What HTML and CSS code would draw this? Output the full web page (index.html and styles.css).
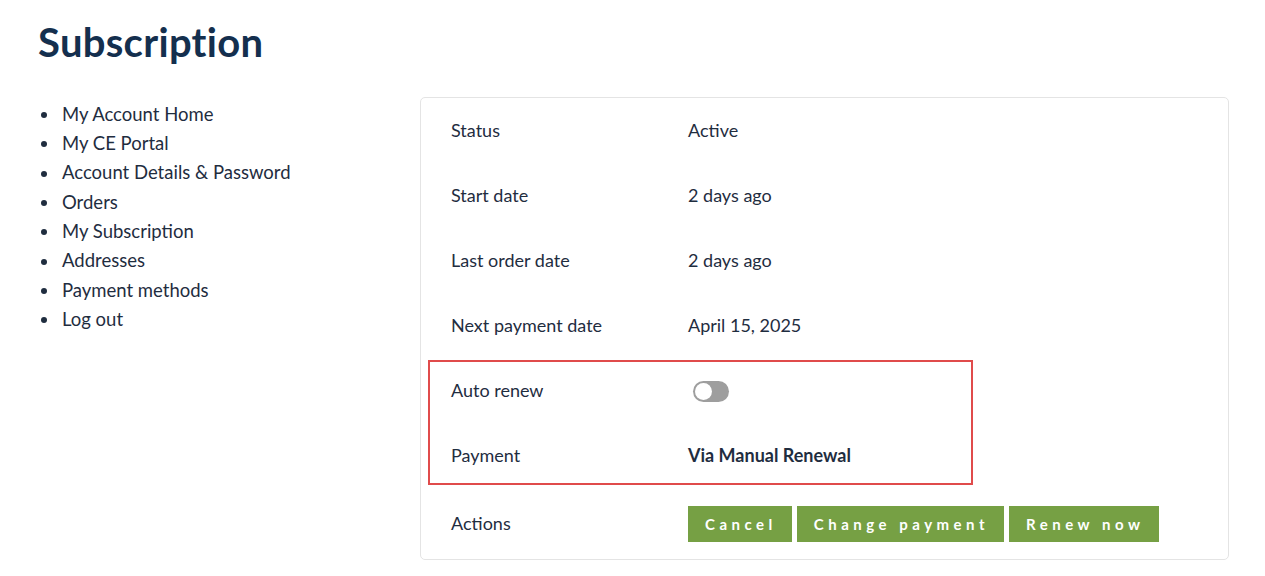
FILE: index.html
```html
<!DOCTYPE html>
<html lang="en">
<head>
    <meta charset="UTF-8">
    <title>Subscription</title>
    <link rel="stylesheet" href="styles.css">
</head>
<body>
<div id="account">
    <h1 class="pageTitle">Subscription</h1>
    <div class="wrap">
        <ul class="nav">
            <li><a href="javascript:;">My Account Home</a></li>
            <li><a href="javascript:;">My CE Portal</a></li>
            <li><a href="javascript:;">Account Details &amp; Password</a></li>
            <li><a href="javascript:;">Orders</a></li>
            <li><a href="javascript:;">My Subscription</a></li>
            <li><a href="javascript:;">Addresses</a></li>
            <li><a href="javascript:;">Payment methods</a></li>
            <li><a href="javascript:;">Log out</a></li>
        </ul>
        <div class="card">
            <div class="row"><span class="label">Status</span><span class="value">Active</span></div>
            <div class="row"><span class="label">Start date</span><span class="value">2 days ago</span></div>
            <div class="row"><span class="label">Last order date</span><span class="value">2 days ago</span></div>
            <div class="row"><span class="label">Next payment date</span><span class="value">April 15, 2025</span></div>
            <div class="mark">
                <div class="row"><span class="label">Auto renew</span><span class="value"><span class="toggle"></span></span></div>
                <div class="row"><span class="label">Payment</span><span class="value strong">Via Manual Renewal</span></div>
            </div>
            <div class="row actions">
                <span class="label">Actions</span>
                <span class="value btns">
                    <a href="javascript:;" class="btn">Cancel</a>
                    <a href="javascript:;" class="btn">Change payment</a>
                    <a href="javascript:;" class="btn">Renew now</a>
                </span>
            </div>
        </div>
    </div>
</div>
</body>
</html>
```

FILE: styles.css
```css
*{ margin: 0; padding: 0; box-sizing: border-box; }
a{ text-decoration: none; color: inherit; }
body{ background: #fff; color: #1f2d3f; font: 18px/1.5 Lato, "Open Sans", sans-serif; }

#account{ padding: 16px 36px 0 38px; }
#account .pageTitle{ font: 700 40px/52px Lato, sans-serif; color: #142f4e; letter-spacing: 0.3px; }
#account .wrap{ display: flex; margin-top: 29px; }

#account .nav{ width: 382px; flex: none; padding: 3px 0 0 24px; list-style: none; }
#account .nav li{ display: flex; align-items: center; height: 29.3px; font-size: 18.5px; }
#account .nav li:before{ content: ""; flex: none; width: 6px; height: 6px; border-radius: 50%; background: #1f2d3f; margin: 1px 15px 0 -21px; }

#account .card{ flex: 1; border: 1px solid #e4e4e4; border-radius: 5px; }
#account .row{ display: flex; align-items: center; height: 65px; padding-left: 30px; }
#account .row .label{ width: 237px; flex: none; }
#account .row .strong{ font-weight: 700; }
#account .mark{ position: relative; }
#account .mark:after{ content: ""; position: absolute; left: 7px; top: 2px; width: 541px; height: 121px; border: 2px solid #e04b4b; pointer-events: none; }

#account .toggle{ display: block; width: 36px; height: 21px; border-radius: 11px; background: #9e9e9e; position: relative; margin-left: 5px; margin-top: 2px; }
#account .toggle:after{ content: ""; position: absolute; left: 2px; top: 2px; width: 17px; height: 17px; border-radius: 50%; background: #fff; }

#account .actions{ height: 71px; }
#account .btns{ display: flex; gap: 5px; }
#account .btn{ display: block; height: 36px; line-height: 36px; padding: 0 15px 0 17px; background: #76a044; color: #fff; font-weight: 700; font-size: 15px; letter-spacing: 4.5px; }
```
